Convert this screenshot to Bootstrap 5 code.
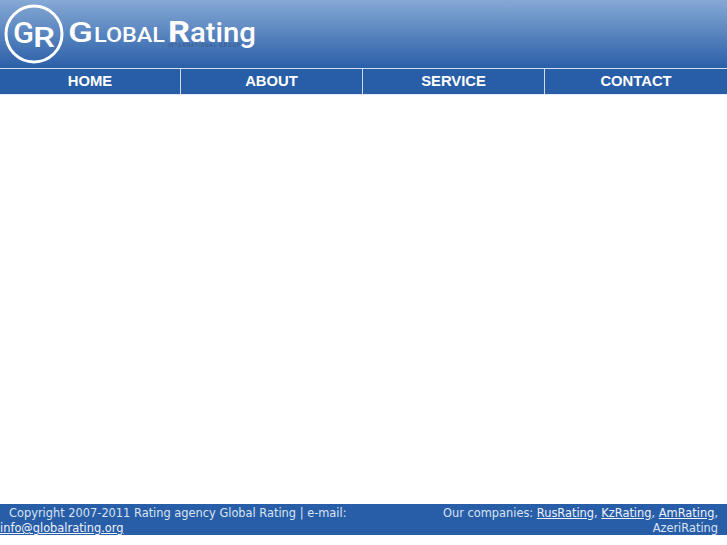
<!doctype html>
<html lang="en"><head><meta charset="utf-8"><title>Global Rating</title>
<link rel="stylesheet" href="https://cdn.jsdelivr.net/npm/bootstrap@5.3.0/dist/css/bootstrap.min.css">
<style>
html,body{height:100%}
body{background:#fff;overflow:hidden}
.gr-head{height:68px;background:linear-gradient(#86a9d5,#2a5fa8)}
.gr-logo{display:block}
.gr-nav{height:27px;background:#285da8;border-top:1px solid #d5e0ee;border-bottom:1px solid #e4ebf4}
.gr-nav a{font:bold 14.8px/24px "Liberation Sans",Arial,sans-serif;color:#fff;text-decoration:none;text-align:center;flex:0 0 auto;border-left:1px solid #cfdcec}
.gr-nav a:first-child{border-left:0;width:180px}
.gr-nav a:nth-child(2){width:182px}
.gr-nav a:nth-child(3){width:182px}
.gr-nav a:nth-child(4){width:183px}
.gr-main{height:409px}
.gr-foot{height:31px;background:#285da8;color:#d9e4f2;font:11.4px/15px "DejaVu Sans",sans-serif;padding-top:2px}
.gr-foot a{color:#eef3fa}
.gr-left{width:364px;text-indent:9px}
.gr-right{width:300px;margin-left:auto;margin-right:9px;text-align:right}
</style></head>
<body>
<header class="gr-head">
<svg class="gr-logo" width="270" height="68" viewBox="0 0 270 68" role="img" aria-label="Global Rating">
<circle cx="34" cy="34" r="28" fill="none" stroke="#fff" stroke-width="3"/>
<g font-family="Roboto,sans-serif" fill="#fff" font-weight="500">
<text x="13" y="43" font-size="30" textLength="21" lengthAdjust="spacingAndGlyphs">G</text>
<text x="33" y="47" font-size="27" textLength="22" lengthAdjust="spacingAndGlyphs">R</text>
<text x="68" y="42" font-size="28" textLength="25" lengthAdjust="spacingAndGlyphs">G</text>
<text x="94" y="42" font-size="21" textLength="71" lengthAdjust="spacingAndGlyphs">LOBAL</text>
<text x="168" y="42" font-size="29" font-weight="700" textLength="22" lengthAdjust="spacingAndGlyphs">R</text>
<text x="190" y="42" font-size="27" textLength="66" lengthAdjust="spacingAndGlyphs">ating</text>
</g>
<text x="168" y="47" font-family="'Liberation Sans',sans-serif" font-size="4.5" fill="#34527f" textLength="72" lengthAdjust="spacing">INTERNATIONAL GROUP</text>
</svg>
</header>
<nav class="gr-nav d-flex">
<a href="#">HOME</a><a href="#">ABOUT</a><a href="#">SERVICE</a><a href="#">CONTACT</a>
</nav>
<main class="gr-main"></main>
<footer class="gr-foot d-flex">
<div class="gr-left">Copyright 2007-2011 Rating agency Global Rating | e-mail: <a href="#">info@globalrating.org</a></div>
<div class="gr-right">Our companies: <a href="#">RusRating</a>, <a href="#">KzRating</a>, <a href="#">AmRating</a>, AzeriRating</div>
</footer>
<script src="https://cdn.jsdelivr.net/npm/bootstrap@5.3.0/dist/js/bootstrap.bundle.min.js"></script>
</body></html>
